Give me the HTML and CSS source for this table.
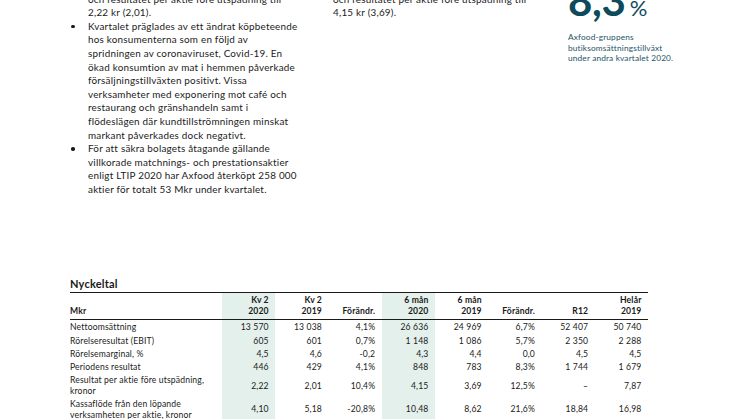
FILE: index.html
```html
<!DOCTYPE html>
<html lang="sv">
<head>
<meta charset="utf-8">
<title>Axfood – Nyckeltal</title>
<link rel="stylesheet" href="styles.css">
</head>
<body>
<div class="page">
  <section class="top">
    <ul class="bullets">
      <li><span>Rörelseresultatet uppgick till 605 Mkr (601)<br>och resultatet per aktie före utspädning till<br>2,22 kr (2,01).</span></li>
      <li><span>Kvartalet präglades av ett ändrat köpbeteende<br>hos konsumenterna som en följd av<br>spridningen av coronaviruset, Covid-19. En<br>ökad konsumtion av mat i hemmen påverkade<br>försäljningstillväxten positivt. Vissa<br>verksamheter med exponering mot café och<br>restaurang och gränshandeln samt i<br>flödeslägen där kundtillströmningen minskat<br>markant påverkades dock negativt.</span></li>
      <li><span>För att säkra bolagets åtagande gällande<br>villkorade matchnings- och prestationsaktier<br>enligt LTIP 2020 har Axfood återköpt 258 000<br>aktier för totalt 53 Mkr under kvartalet.</span></li>
    </ul>
    <ul class="bullets">
      <li><span>Rörelseresultatet uppgick till 1 148 Mkr (1 086)<br>och resultatet per aktie före utspädning till<br>4,15 kr (3,69).</span></li>
    </ul>
    <div class="kpi">
      <div class="kpi-value">8,3<span class="pct">%</span></div>
      <p class="kpi-text">Axfood-gruppens<br>butiksomsättningstillväxt<br>under andra kvartalet 2020.</p>
    </div>
  </section>

  <section class="keyfig">
    <h2 class="keyfig-title">Nyckeltal</h2>
    <table class="kt">
      <colgroup>
        <col class="c-label">
        <col class="c-num"><col class="c-num"><col class="c-num"><col class="c-num">
        <col class="c-num"><col class="c-num"><col class="c-num"><col class="c-num">
      </colgroup>
      <thead>
        <tr class="head">
          <th class="lbl">Mkr</th>
          <th class="hl">Kv 2<br>2020</th>
          <th>Kv 2<br>2019</th>
          <th>Förändr.</th>
          <th class="hl">6 mån<br>2020</th>
          <th>6 mån<br>2019</th>
          <th>Förändr.</th>
          <th>R12</th>
          <th>Helår<br>2019</th>
        </tr>
      </thead>
      <tbody>
        <tr>
          <td class="lbl">Nettoomsättning</td>
          <td class="hl">13 570</td><td>13 038</td><td>4,1%</td>
          <td class="hl">26 636</td><td>24 969</td><td>6,7%</td>
          <td>52 407</td><td>50 740</td>
        </tr>
        <tr>
          <td class="lbl">Rörelseresultat (EBIT)</td>
          <td class="hl">605</td><td>601</td><td>0,7%</td>
          <td class="hl">1 148</td><td>1 086</td><td>5,7%</td>
          <td>2 350</td><td>2 288</td>
        </tr>
        <tr>
          <td class="lbl">Rörelsemarginal, %</td>
          <td class="hl">4,5</td><td>4,6</td><td>-0,2</td>
          <td class="hl">4,3</td><td>4,4</td><td>0,0</td>
          <td>4,5</td><td>4,5</td>
        </tr>
        <tr>
          <td class="lbl">Periodens resultat</td>
          <td class="hl">446</td><td>429</td><td>4,1%</td>
          <td class="hl">848</td><td>783</td><td>8,3%</td>
          <td>1 744</td><td>1 679</td>
        </tr>
        <tr>
          <td class="lbl">Resultat per aktie före utspädning,<br>kronor</td>
          <td class="hl">2,22</td><td>2,01</td><td>10,4%</td>
          <td class="hl">4,15</td><td>3,69</td><td>12,5%</td>
          <td>–</td><td>7,87</td>
        </tr>
        <tr>
          <td class="lbl">Kassaflöde från den löpande<br>verksamheten per aktie, kronor</td>
          <td class="hl">4,10</td><td>5,18</td><td>-20,8%</td>
          <td class="hl">10,48</td><td>8,62</td><td>21,6%</td>
          <td>18,84</td><td>16,98</td>
        </tr>
      </tbody>
    </table>
  </section>
</div>
</body>
</html>
```

FILE: styles.css
```css
html, body {
  margin: 0;
  padding: 0;
  background: #ffffff;
}

body {
  font-family: Lato, "Liberation Sans", sans-serif;
  color: #1a1a1a;
  overflow: hidden;
}

.page {
  padding-left: 70px;
}

/* ---------- top text area ---------- */
.top {
  display: grid;
  grid-template-columns: 245px 253px 1fr;
  align-items: start;
  margin-top: -21px;
}

.bullets {
  list-style: none;
  margin: 0;
  padding: 0;
  font-size: 9.9px;
  letter-spacing: 0.22px;
  line-height: 13.6px;
  white-space: nowrap;
}

.bullets li {
  display: grid;
  grid-template-columns: 18px auto;
}

.bullets li::before {
  content: "";
  width: 3.5px;
  height: 3.5px;
  border-radius: 50%;
  background: #1a1a1a;
  margin: 5px 0 0 1px;
}

.kpi-value {
  font-size: 42px;
  line-height: 42px;
  font-weight: 700;
  color: #0e4a5b;
  white-space: nowrap;
  letter-spacing: -0.3px;
}

.pct {
  font-size: 22px;
  font-weight: 400;
  letter-spacing: 0;
  margin-left: 4px;
}

.kpi-text {
  margin: 3px 0 0;
  font-size: 8.3px;
  letter-spacing: 0.15px;
  line-height: 10.7px;
  color: #1d5566;
}

/* ---------- key figures ---------- */
.keyfig {
  margin-top: 80px;
  width: 578px;
}

.keyfig-title {
  margin: 0;
  padding-bottom: 1px;
  font-size: 11px;
  letter-spacing: 0.2px;
  line-height: 14px;
  font-weight: 700;
}

.kt {
  width: 578px;
  border-collapse: collapse;
  table-layout: fixed;
  font-size: 8.6px;
  letter-spacing: 0.15px;
  border-top: 1px solid #1a1a1a;
}

.c-label { width: 152px; }
.c-num { width: 53.25px; }

.kt th,
.kt td {
  padding: 2.75px 6.5px 0 0;
  line-height: 10.5px;
  text-align: right;
  vertical-align: middle;
  white-space: nowrap;
}

.kt .head th {
  vertical-align: bottom;
  padding: 2.5px 6.5px 1.5px 0;
  line-height: 11px;
  font-weight: 700;
  border-bottom: 1px solid #1a1a1a;
}

.kt .lbl {
  text-align: left;
  padding-left: 0;
}

.kt .hl {
  background: #e4f0ec;
}
```
